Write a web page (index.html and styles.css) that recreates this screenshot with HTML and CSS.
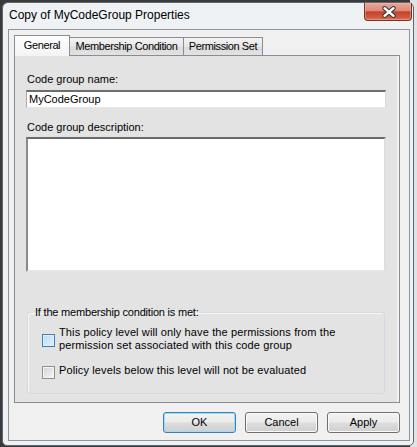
FILE: index.html
```html
<!DOCTYPE html>
<html>
<head>
<meta charset="utf-8">
<link rel="stylesheet" href="styles.css">
</head>
<body>
<div class="window">
  <div class="titlebar">
    <span class="title">Copy of MyCodeGroup Properties</span>
    <div class="close">
      <svg width="16" height="12" viewBox="0 0 16 12">
        <path d="M3.5 2.2 L12.5 9.8 M12.5 2.2 L3.5 9.8" stroke="#3a3a3a" stroke-width="4.4" stroke-linecap="round" fill="none"/>
        <path d="M3.5 2.2 L12.5 9.8 M12.5 2.2 L3.5 9.8" stroke="#ffffff" stroke-width="2.4" stroke-linecap="round" fill="none"/>
      </svg>
    </div>
  </div>
  <div class="client">
    <div class="tabs">
      <div class="tab active tab-general">General</div>
      <div class="tab tab-member">Membership Condition</div>
      <div class="tab tab-perm">Permission Set</div>
    </div>
    <div class="panel">
      <span class="lbl">Code group name:</span>
      <div class="textbox">MyCodeGroup</div>
      <span class="lbl lbl2">Code group description:</span>
      <div class="textarea"></div>
      <fieldset class="group">
        <legend>If the membership condition is met:</legend>
        <div class="check">
          <span class="box hover"></span>
          <span class="ctext">This policy level will only have the permissions from the<br>permission set associated with this code group</span>
        </div>
        <div class="check check2">
          <span class="box"></span>
          <span class="ctext">Policy levels below this level will not be evaluated</span>
        </div>
      </fieldset>
    </div>
    <div class="buttons">
      <div class="btn default">OK</div>
      <div class="btn">Cancel</div>
      <div class="btn">Apply</div>
    </div>
  </div>
</div>
</body>
</html>
```
FILE: styles.css
```css
html, body {
  margin: 0;
  padding: 0;
}
body {
  width: 417px;
  height: 447px;
  overflow: hidden;
  background: linear-gradient(to right, #3a3a3a 0, #3a3a3a 410px, #e2e2e2 410px);
  font-family: "Liberation Sans", Arial, sans-serif;
  font-size: 11px;
  color: #000;
}
.window {
  box-sizing: border-box;
  margin: 2px 0 0 2px;
  width: 412px;
  height: 444px;
  border: 1px solid #5f6770;
  border-radius: 6px 6px 5px 5px;
  background: #eff2f5;
  display: flex;
  flex-direction: column;
}
.titlebar {
  flex: none;
  height: 26px;
  display: flex;
  align-items: flex-start;
}
.title {
  font-size: 12px;
  line-height: 15px;
  padding: 5px 0 0 6px;
}
.close {
  margin-left: auto;
  margin-right: 1px;
  width: 48px;
  height: 18px;
  box-sizing: border-box;
  border: 1px solid #7a3328;
  border-top: none;
  border-radius: 0 0 4px 4px;
  background: linear-gradient(#e9a897 0, #dc8a78 45%, #c4422a 52%, #cf5a40 85%, #e07a5f 100%);
  box-shadow: inset 0 0 0 1px rgba(255, 200, 190, 0.35);
  display: flex;
  align-items: center;
  justify-content: center;
}
.close svg {
  display: block;
  margin-left: 2px;
}
.client {
  flex: none;
  box-sizing: border-box;
  margin: 0 3px 0 5px;
  height: 412px;
  border: 1px solid #8f949a;
  background: #f0f0f0;
  padding: 5px 9px 0 5px;
  display: flex;
  flex-direction: column;
}
.tabs {
  flex: none;
  height: 20px;
  display: flex;
  align-items: flex-end;
  position: relative;
  z-index: 1;
}
.tab {
  box-sizing: border-box;
  height: 18px;
  border: 1px solid #898c95;
  border-bottom: none;
  border-left: none;
  background: linear-gradient(#f3f3f3, #e6e6e6 50%, #dadada 51%, #e2e2e2);
  text-align: center;
  line-height: 13px;
  padding-top: 2px;
  white-space: nowrap;
  letter-spacing: -0.4px;
}
.tab.active {
  height: 21px;
  margin-bottom: -1px;
  border-left: 1px solid #898c95;
  background: linear-gradient(#fdfdfd, #f4f4f4);
  padding-top: 3px;
  border-radius: 1px 1px 0 0;
}
.tab-general { width: 56px; }
.tab-member { width: 114px; }
.tab-perm { width: 79px; }
.panel {
  flex: none;
  box-sizing: border-box;
  height: 348px;
  border: 1px solid #898c95;
  background: #e3e3e3;
  box-shadow: inset -2px 0 0 #f2f2f2;
  padding: 17px 12px 0 11px;
}
.lbl {
  display: block;
  height: 13px;
  line-height: 13px;
  padding-left: 1px;
}
.lbl2 {
  margin-top: 13px;
}
.textbox {
  box-sizing: border-box;
  margin-top: 4px;
  width: 360px;
  height: 18px;
  background: #fff;
  border-style: solid;
  border-width: 2px 1px 1px 1px;
  border-color: #6e6e6e #d9d9d9 #e6e6e6 #a9a9a9;
  line-height: 14px;
  padding-left: 2px;
}
.textarea {
  box-sizing: border-box;
  margin-top: 3px;
  width: 360px;
  height: 135px;
  background: #fff;
  border-style: solid;
  border-width: 2px 2px 2px 2px;
  border-color: #6a6a6a #dedede #e6e6e6 #8a8a8a;
}
.group {
  box-sizing: border-box;
  margin: 34px 0 0 1px;
  width: 358px;
  padding: 7px 0 14px 14px;
  border: 1px solid #d0dae0;
  border-radius: 3px;
  box-shadow: inset 1px 1px 0 #f8f8f8;
  min-width: 0;
}
.group legend {
  padding: 0 2px;
  margin-left: -9px;
  line-height: 13px;
  letter-spacing: -0.2px;
}
.check {
  display: flex;
  align-items: flex-start;
  gap: 4px;
}
.check2 {
  margin-top: 12px;
}
.ctext {
  line-height: 13px;
  letter-spacing: 0.12px;
}
.box {
  flex: none;
  box-sizing: border-box;
  width: 13px;
  height: 13px;
  margin-top: 8px;
  border: 1px solid #8f8f8f;
  background: linear-gradient(135deg, #cfd3d8, #f7f7f7);
  box-shadow: inset 0 0 0 1px #f4f4f4;
}
.box.hover {
  border-color: #3c7fb1;
  background: linear-gradient(135deg, #b6dbf6, #e3f2fc);
  box-shadow: inset 0 0 0 1px #def0fc;
}
.check2 .box {
  margin-top: 2px;
}
.buttons {
  flex: none;
  margin-top: 9px;
  display: flex;
  justify-content: flex-end;
  gap: 9px;
}
.btn {
  box-sizing: border-box;
  width: 73px;
  height: 21px;
  border: 1px solid #707070;
  border-radius: 3px;
  background: linear-gradient(#f2f2f2 0, #ebebeb 48%, #dddddd 52%, #cfcfcf 100%);
  box-shadow: inset 0 0 0 1px #fbfbfb;
  text-align: center;
  line-height: 18px;
}
.btn.default {
  border-color: #3c7fb1;
  box-shadow: inset 0 0 0 1px #9fdcf8;
}
```
